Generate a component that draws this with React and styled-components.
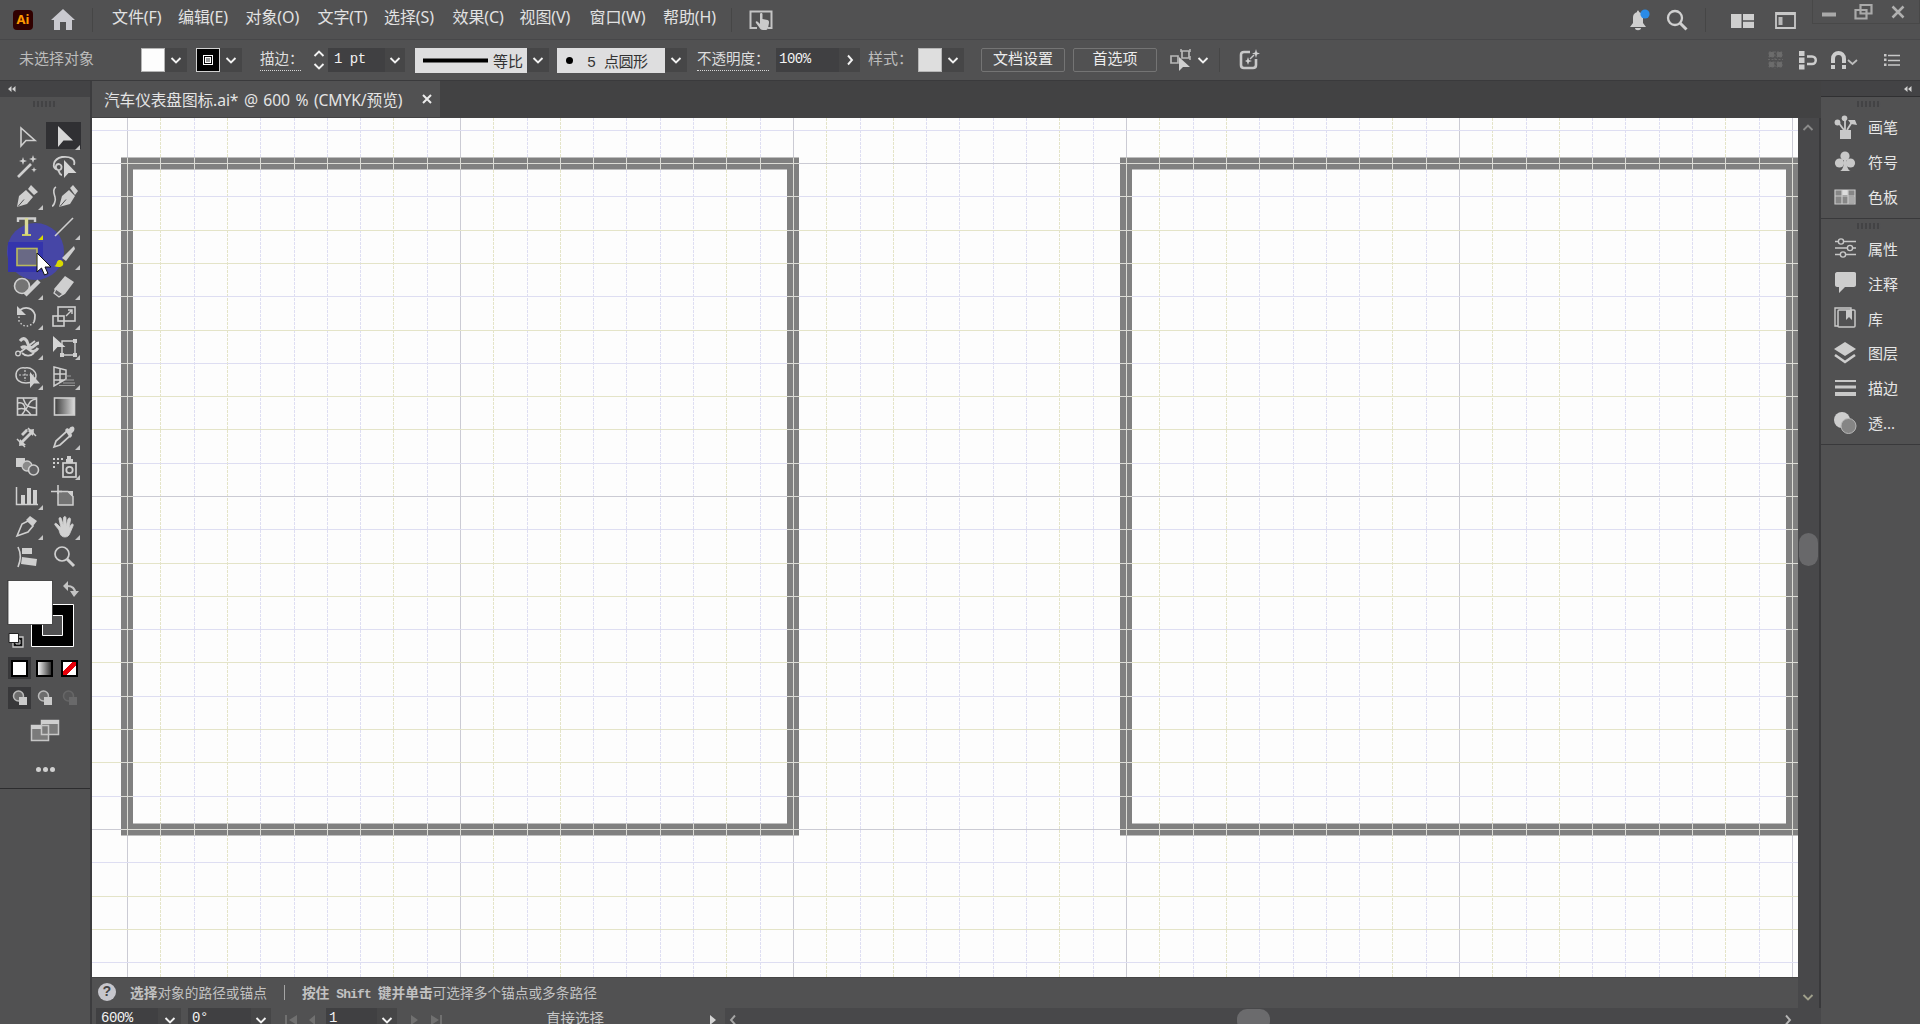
import React from 'react';
import styled, { createGlobalStyle } from 'styled-components';

const SANS = `"Noto Sans", "Noto Sans CJK SC", sans-serif`;
const CJK = `"Liberation Mono", "Noto Sans CJK SC", monospace`;

const menus = [
    ['文件(F)', 66], ['编辑(E)', 67.5], ['对象(O)', 72], ['文字(T)', 66.5], ['选择(S)', 68.5],
    ['效果(C)', 67], ['视图(V)', 70], ['窗口(W)', 73.5], ['帮助(H)', 68],
];

// 37x30 cells, two per row
const tools = [
    { icon: <path d="M13 6v18l5-5.500h9z" fill="none" strokeWidth="1.600" /> },
    { icon: <path d="M13 4v21l5.500-6.500h9.500z" fill="#d6d6d6" stroke="none" />, more: true, active: true },
    { icon: <><path d="M10 25l13-13" strokeWidth="2.600" /><path d="M15 5l1 3 3 1-3 1-1 3-1-3-3-1 3-1zM25 3l1 3 3 1-3 1-1 3-1-3-3-1 3-1zM26 15l.8 2 2 .8-2 .8-.8 2-.8-2-2-.8 2-.8z" fill="#cfcfcf" stroke="none" /></> },
    { icon: <><path d="M13 18c-7-2-5-11 4-13 8-1 14 2 12 8M13 18c4 1 5-5 1-6-4 0-4 5-1 6 2 2 1 5 4 5" fill="none" strokeWidth="1.800" /><path d="M19 8v18l4.500-5h8z" fill="#d6d6d6" stroke="none" /></> },
    { icon: <><path d="M9 25l2-11 7-6 7 7-6 7zM20 7l3-4 7 7-4 3z" fill="#cfcfcf" stroke="none" /><path d="M10 24.500l6-7" stroke="#505052" strokeWidth="1" /></>, more: true },
    { icon: <><path d="M14 25l3-11 7-6 6 6-5 8zM25 6l3-3 5 6-3 4z" fill="#cfcfcf" stroke="none" /><path d="M15 24.500l6-7" stroke="#505052" strokeWidth="1" /><path d="M11 5c-4 2-2 7-1 10s-1 9-3 9" fill="none" strokeWidth="1.600" /></> },
    { icon: <><path d="M10 10V6.500h17V10" fill="none" strokeWidth="2.400" /><path d="M18.500 6v17" strokeWidth="3.400" stroke="#d8d897" /><path d="M14 23h9" strokeWidth="1.800" stroke="#d8d860" /></>, more: true, hot: true },
    { icon: <path d="M10 24L28 6" strokeWidth="1.600" />, more: true },
    { icon: <rect x="9" y="6.500" width="20" height="17" fill="#696985" stroke="#b9b95e" strokeWidth="1.600" />, pressed: true },
    { icon: <><path d="M29 4l-12 12 4 3L30 7z" fill="#cfcfcf" stroke="none" /><path d="M9 24c3 0 2-5 5-6 3 0 5 2 4 5-2 3-6 2-9 1z" fill="#d9d900" stroke="none" /></>, more: true },
    { icon: <><circle cx="14" cy="14" r="7.500" fill="#747474" strokeWidth="1.600" /><path d="M17 23L31 9" strokeWidth="4.500" /></>, more: true },
    { icon: <><path d="M9 17L20 4l9 6-9 12-6 3z" fill="#cfcfcf" stroke="none" /><path d="M11 17l7 5-4 3-5-4z" fill="#626264" stroke="#cfcfcf" strokeWidth="1.300" /></>, more: true },
    { icon: <><path d="M12 8c6-4 13-2 15 5 0 3 0 5-1 7" fill="none" strokeWidth="1.800" /><path d="M26 20c-4 5-11 6-15-1v-6" fill="none" strokeWidth="1.400" strokeDasharray="1.500 2" /><path d="M9 4v9h9z" fill="#cfcfcf" stroke="none" /></>, more: true },
    { icon: <><rect x="13" y="5" width="17" height="14" fill="none" strokeWidth="1.600" /><rect x="8" y="14" width="11" height="10" fill="none" strokeWidth="1.600" /><path d="M21 14l6-6M23 8h4v4" fill="none" strokeWidth="1.400" /></>, more: true },
    { icon: <><path d="M12 9c4-5 7-1 8 3 1 3 3 5 6 2 2-2 3-3 5-3M13 16c4-3 7 0 9 2 3 3 6 1 8-2" fill="none" strokeWidth="3" /><path d="M10 22l17-13M14 21c4 4 9 3 12 0" fill="none" strokeWidth="1.800" /><circle cx="10" cy="21.500" r="2.300" fill="#505052" strokeWidth="1.300" /></>, more: true },
    { icon: <><path d="M17 9h13v14H17z" fill="none" strokeWidth="1.400" /><path d="M28 7h4v4h-4zM28 21h4v4h-4zM15 21h4v4h-4z" fill="#cfcfcf" stroke="none" /><path d="M8 4v16l4.500-5h8z" fill="#d6d6d6" stroke="none" /></>, more: true },
    { icon: <><path d="M8 13c0-5 4-8 9-7 6-1 11 3 11 8s-4 7-10 7c-6 0-10-3-10-8z" fill="none" strokeWidth="1.500" /><path d="M11 13h15M17 8v11" fill="none" strokeWidth="1.200" strokeDasharray="2 1.500" /><path d="M22 10v16l4-4.500h6z" fill="#cfcfcf" stroke="none" /></>, more: true },
    { icon: <><path d="M9 5l12 3v9L9 24zM15 6.500v14M9 12h12M9 18h11" fill="none" strokeWidth="1.500" /><path d="M21 14h5M20 18h9M14 23.500h16M18 21h12" strokeWidth="1.200" stroke="#9c9c9c" /></>, more: true },
    { icon: <><rect x="9.500" y="6" width="19" height="17" fill="none" strokeWidth="1.600" /><path d="M10 11c5-1 7 2 7 6s-3 4-3 6M15 6c2 4 1 9 13 10M28 7c-7 1-7 6-10 10M10 17c5-1 8-1 13 6" fill="none" strokeWidth="1.500" /></> },
    { icon: <rect x="9.500" y="6" width="20" height="17" fill="url(#toolGradient)" strokeWidth="1.600" /> },
    { icon: <><path d="M12 22L25 9" strokeWidth="2.800" /><path d="M9 17l8 8M20 6l8 8" strokeWidth="1.500" /><path d="M11 24l1-7 6 6zM26 7l-7 1 6 6zM15 14l-2-2 5-5 3 1" fill="#cfcfcf" stroke="none" /></> },
    { icon: <><path d="M9 25l2-6L22 9l4 4-11 10z" fill="none" strokeWidth="1.700" /><path d="M20 8l2-2 2 1c2-4 7-3 5 2l-3 3 1 2-2 2z" fill="#cfcfcf" stroke="none" /></>, more: true },
    { icon: <><path d="M8 6h9v9H8z" fill="#cfcfcf" stroke="none" /><circle cx="19" cy="14" r="5" fill="#8a8a8a" strokeWidth="1.300" /><circle cx="25.500" cy="18" r="5" fill="#626264" strokeWidth="1.600" /></> },
    { icon: <><rect x="18" y="11" width="13" height="14" fill="none" strokeWidth="1.700" /><path d="M21 7h7v4h-7zM22 4h4v3h-4z" fill="#cfcfcf" stroke="none" /><circle cx="24.500" cy="18" r="3.200" fill="none" strokeWidth="1.800" /><path d="M8 7h10M8 11h7M8 15h4" strokeWidth="2" strokeDasharray="2 2" /></>, more: true },
    { icon: <><path d="M8.500 5v17.500H30" fill="none" strokeWidth="1.500" /><path d="M13 13h4v9h-4zM19 6h4v16h-4zM25 8h4v14h-4z" fill="#cfcfcf" stroke="none" /></>, more: true },
    { icon: <><path d="M13 9.500h10l5 5V23H13z" fill="#737373" strokeWidth="1.500" /><path d="M13 3v9M6 9.500h11" strokeWidth="1.500" /><path d="M22 9h6v6z" fill="#cfcfcf" stroke="none" /></> },
    { icon: <><path d="M9 24l5-12 6-3 5 5-5 6z" fill="none" strokeWidth="1.600" /><path d="M18 8l4-4 7 5-4 5z" fill="#cfcfcf" stroke="none" /></>, more: true },
    { icon: <path d="M14 18l-4-5c-1-2 1-2 2-1l4 4-2-9c0-2 2-2 2.500 0l2 7V6c0-2 2.500-2 2.500 0v8l2-7c1-2 3-1 2.500 1l-1.500 8 2-3c1-2 3-1 2 1l-3 7c-1 3-3 4-5 4-4 0-5-3-6-7z" fill="#d2d2d2" stroke="#d2d2d2" strokeWidth=".8" />, more: true },
    { icon: <><path d="M10 5c3 6 3 13 0 20" fill="none" strokeWidth="1.600" /><path d="M14 6h10v6H14zM14 15l15 2-1 7-15-2z" fill="#cfcfcf" stroke="none" /></> },
    { icon: <><circle cx="17" cy="12" r="7" fill="none" strokeWidth="1.700" /><path d="M22 17l7 7" strokeWidth="3" /></> },
];

const dockTop = [
    { label: '画笔', icon: <><path d="M6 15h11v9H6z" fill="#c8c8c8" /><path d="M10 15L4 7M11 15V4M13 15l5-8" stroke="#c8c8c8" strokeWidth="1.800" /><circle cx="3.500" cy="7.500" r="2.900" fill="#c8c8c8" /><circle cx="10.500" cy="3.200" r="2.800" fill="#c8c8c8" /><path d="M14 5h7l2 5-6-1z" fill="#c8c8c8" /></> },
    { label: '符号', icon: <><circle cx="11" cy="6" r="4.600" fill="#c8c8c8" /><circle cx="5.500" cy="13" r="4.600" fill="#c8c8c8" /><circle cx="16.500" cy="13" r="4.600" fill="#c8c8c8" /><path d="M10 9h2.500c0 6 1 11 4 12H6c3-1 4-6 4-12z" fill="#c8c8c8" /></> },
    { label: '色板', icon: <><path d="M1 5h20v14H1z" fill="#868686" stroke="#c8c8c8" strokeWidth="1.200" /><path d="M8 5h6v5H8z" fill="#dcdcdc" /><path d="M14 12h6v6h-6z" fill="#a9a9a9" /><path d="M1 11h20M8 5v14M14 5v14" stroke="#c8c8c8" strokeWidth="1.200" /></> },
];

const dockBottom = [
    { label: '属性', icon: <g fill="#505052" stroke="#c8c8c8" strokeWidth="1.400"><path d="M1 5.500h21M1 12h21M1 18.500h21" /><circle cx="7" cy="5.500" r="2.600" /><circle cx="16" cy="12" r="2.600" /><circle cx="9" cy="18.500" r="2.600" /></g> },
    { label: '注释', icon: <path d="M3 1h17c2 0 2 1 2 2v11c0 1-1 2-2 2h-9l-6 6v-6H3c-1 0-2-1-2-2V3c0-1 1-2 2-2z" fill="#cdcdcd" /> },
    { label: '库', icon: <><path d="M4 20H1V2h16v2" fill="none" stroke="#c8c8c8" strokeWidth="1.400" /><rect x="4" y="4" width="17" height="17" rx="1" fill="none" stroke="#c8c8c8" strokeWidth="1.500" /><path d="M12 4h6v10l-3-3-3 3z" fill="#c8c8c8" /></> },
    { label: '图层', icon: <><path d="M11 1l11 7-11 7L0 8z" fill="#cdcdcd" /><path d="M1 14l10 7 10-7" fill="none" stroke="#cdcdcd" strokeWidth="2.600" /></> },
    { label: '描边', icon: <path d="M1 4h21v2H1zM1 9.500h21v3H1zM1 16h21v4H1z" fill="#c8c8c8" /> },
    { label: '透...', icon: <><circle cx="8" cy="9" r="8" fill="#cdcdcd" /><circle cx="14.500" cy="15" r="7.500" fill="#858585" stroke="#b8b8b8" /></> },
];

const COL_TINTS = 'yylyllllyl';
const ROW_TINTS = 'ylyylylyyl';
const tint = { y: '#e4e4c8', l: '#dedef2' };

const gridLines = (count, first, tints) =>
    Array.from({ length: count }, (_, i) => {
        const k = i + first;
        return {
            pos: Math.round(k * 33.3) + 0.5,
            major: k % 10 === 0,
            color: k % 10 === 0 ? '#cbcbd4' : tint[tints[((k % 10) + 10) % 10]],
        };
    });

const cols = gridLines(51, 0, COL_TINTS).map((l) => ({ ...l, pos: l.pos + 35 }));
const rows = gridLines(26, -1, ROW_TINTS).map((l) => ({ ...l, pos: l.pos + 45 }));

const Artboard = ({ x }) => (
    <g>
        <rect x={x + 6} y="45.5" width="666" height="666" fill="none" stroke="#808080" strokeWidth="12" />
        <clipPath id={`frame${x}`}>
            <path clipRule="evenodd" d={`M${x} 39.500h678v678h-678zM${x + 12} 51.500v654h654v-654z`} />
        </clipPath>
        <g clipPath={`url(#frame${x})`} stroke="#dcdcd6">
            {cols.map((l) => <path key={l.pos} d={`M${l.pos} 0v859`} />)}
            {rows.map((l) => <path key={l.pos} d={`M0 ${l.pos}h1706`} />)}
        </g>
    </g>
);

const Canvas = () => (
    <CanvasSvg width="1706" height="859">
        {cols.map((l) => (
            <path key={l.pos} d={`M${l.pos} 0v859`} stroke={l.color} strokeDasharray={l.major ? 'none' : '3 1'} />
        ))}
        {rows.map((l) => (
            <path key={l.pos} d={`M0 ${l.pos}h1706`} stroke={l.color} />
        ))}
        <Artboard x={29} />
        <Artboard x={1028} />
    </CanvasSvg>
);

const Chevron = ({ dir = 'down', color = '#f2f2f2', size = 12 }) => {
    const d = {
        down: 'M1.500 4l4.500 4.500L10.500 4',
        up: 'M1.500 8L6 3.500 10.500 8',
        right: 'M4 1.500L8 6l-4 4.500',
        left: 'M8 1.500L4 6l4 4.500',
    }[dir];
    return (
        <svg width={size} height={size} viewBox="0 0 12 12">
            <path d={d} fill="none" stroke={color} strokeWidth="1.900" />
        </svg>
    );
};

const Collapse = () => (
    <svg width="8" height="6" viewBox="0 0 8 6"><path d="M3.500 0v6L0 3zM7.500 0v6L4 3z" fill="#d0d0d0" /></svg>
);

const MenuBar = () => (
    <TopRow>
        <Spot $at={13}>
            <Logo>Ai</Logo>
        </Spot>
        <Spot $at={18}>
            <svg width="24" height="21" viewBox="0 0 24 21"><path d="M12 0l12 11h-3v10h-6v-8H9v8H3V11H0z" fill="#c9c9cf" /></svg>
        </Spot>
        <Divider $at={17} />
        <Menus>
            {menus.map(([label, w]) => <MenuItem key={label} $w={w}>{label}</MenuItem>)}
        </Menus>
        <Divider $at={0} />
        <Spot $at={17}>
            <svg width="25" height="20" viewBox="0 0 25 20">
                <path d="M8 18H1.500V1.500h21V18H19" fill="none" stroke="#c4c4c4" strokeWidth="2" />
                <path d="M11 4c0-1.500 2.500-1.500 2.500 0v5l5 1c1.500.5 1.500 1 1.500 3l-1 5c-.5 1.500-1 2-3 2h-2c-2 0-3-1-4-3l-3-4c-1-2 1-2 2-1l2 2z" fill="#cacaca" />
            </svg>
        </Spot>
        <Grow />
        <Spot $at={0}>
            <svg width="22" height="22" viewBox="0 0 22 22">
                <path d="M1 18l3-4V9c0-4 2-5 4-6 0-2 2-2 2 0 3 1 4 3 4 6v5l3 4zM6 19h6c0 3-6 3-6 0z" fill="#cfcfcf" />
                <circle cx="16" cy="5" r="4.600" fill="#2a8be6" />
            </svg>
        </Spot>
        <Spot $at={15}>
            <svg width="22" height="22" viewBox="0 0 22 22"><circle cx="9" cy="9" r="7" fill="none" stroke="#d0d0d0" strokeWidth="2.300" /><path d="M14 14l6.500 6.500" stroke="#d0d0d0" strokeWidth="3" /></svg>
        </Spot>
        <Divider $at={17} />
        <Spot $at={25} $down={1}>
            <svg width="23" height="14"><path d="M0 0h10.500v14H0zM12 0h11v6.300H12zM12 7.700h11V14H12z" fill="#cfcfcf" /></svg>
        </Spot>
        <Spot $at={21} $down={1}>
            <svg width="21" height="17"><path d="M1 1h19v15H1z" fill="none" stroke="#c8c8c8" strokeWidth="1.800" /><path d="M1 2.300h19" stroke="#c8c8c8" strokeWidth="1.500" /><path d="M3.500 5h4v8h-4z" fill="#b8b8b8" /></svg>
        </Spot>
        <WindowButtons>
            <svg width="14" height="18"><path d="M0 9.500h14v4H0z" fill="#a9a9a9" /></svg>
            <svg width="19" height="18"><path d="M6.500 2h11v8.500h-11zM1.500 7h11v8.500h-11z" fill="none" stroke="#a9a9a9" strokeWidth="2.200" /></svg>
            <svg width="14" height="18"><path d="M1.500 3.500l11 11M12.500 3.500l-11 11" stroke="#b0b0b0" strokeWidth="2.500" /></svg>
        </WindowButtons>
    </TopRow>
);

const DropButton = ({ $w = 22, dir }) => (
    <Drop $w={$w}><Chevron dir={dir} /></Drop>
);

const ControlBar = () => (
    <ControlRow>
        <Label $w={122} $dim>未选择对象</Label>
        <Swatch />
        <DropButton />
        <StrokeSwatch $at={9}><i /></StrokeSwatch>
        <DropButton />
        <Label $at={18} $w={53}><Dotted $w={41}>描边：</Dotted></Label>
        <Stepper>
            <Chevron dir="up" />
            <Chevron />
        </Stepper>
        <Field $w={57} $pad={6}>1 pt</Field>
        <DropButton $w={20} />
        <LightBox $at={10} $w={112}>
            <svg width="65" height="5"><path d="M0 .5h65v4H0z" /></svg>
            等比
        </LightBox>
        <DropButton />
        <LightBox $at={8} $w={108}>
            <Dot />
            <Brush>5 点圆形</Brush>
        </LightBox>
        <DropButton />
        <Label $at={10} $w={79}><Dotted $w={72}>不透明度：</Dotted></Label>
        <Field $w={63} $pad={3}>100%</Field>
        <DropButton $w={21} dir="right" />
        <Label $at={8} $w={50} $dim>样式：</Label>
        <Swatch $fill="#dedede" />
        <DropButton />
        <PushButton $at={17}>文档设置</PushButton>
        <PushButton $at={8}>首选项</PushButton>
        <Spot $at={13}>
            <svg width="22" height="24" viewBox="0 0 22 24">
                <path d="M1 8h7v7H1zM12 3h7v7h-7z" fill="none" stroke="#b8b8b8" strokeWidth="1.700" />
                <path d="M11 1v3M20 1v3M20 8v4" stroke="#b8b8b8" strokeWidth="1.500" />
                <path d="M9 9v14l4-4h7z" fill="#cfcfcf" />
            </svg>
        </Spot>
        <Spot $at={5}><Chevron /></Spot>
        <Divider $at={10} />
        <Spot $at={19}>
            <svg width="22" height="22" viewBox="0 0 22 22">
                <path d="M11 3H5c-2 0-3 1-3 3v10c0 2 1 3 3 3h9c2 0 3-1 3-3v-6" fill="none" stroke="#c8c8c8" strokeWidth="2.600" />
                <path d="M17 0l1 3.500 3 1-3 1L17 9l-1-3.500-3-1 3-1zM9 8l1 3 3 1-3 1-1 3-1-3-2-1 2-1z" fill="#d0d0d0" />
                <path d="M11 10l4-4" stroke="#c8c8c8" strokeWidth="1.500" />
            </svg>
        </Spot>
        <Grow />
        <svg width="15" height="18" viewBox="0 0 15 18"><path d="M1 1h5v5H1zM9 1h5v5H9zM1 11h5v5H1zM9 11h5v5H9zM7 0v18M0 8.500h15" fill="#6c6c6c" stroke="#686868" strokeDasharray="2 1.500" /></svg>
        <Spot $at={16}>
            <svg width="20" height="19" viewBox="0 0 20 19"><path d="M0 0h5.500v5H0zM0 6.500h5.500v5.500H0zM0 13.500h5.500v5H0z" fill="#cdcdcd" /><path d="M8 5.500h5c5 0 5 7.500 0 7.500H8" fill="none" stroke="#cdcdcd" strokeWidth="2.500" /></svg>
        </Spot>
        <Spot $at={11}>
            <svg width="28" height="19" viewBox="0 0 28 19"><path d="M3 12V8c0-8 11-8 11 0v4" fill="none" stroke="#cdcdcd" strokeWidth="4" /><path d="M1 14h4v4H1zM12 14h4v4h-4z" fill="#cdcdcd" /><path d="M18 9l4.500 4L27 9" fill="none" stroke="#bdbdbd" strokeWidth="1.700" /></svg>
        </Spot>
        <Spot $at={26}>
            <svg width="16" height="13" viewBox="0 0 16 13"><path d="M0 0h2.500v2.500H0zM0 4.500h2.500V7H0zM0 9.500h2.500V12H0z" fill="#c8c8c8" /><path d="M4 1.500h12M4 6.500h12M4 11h12" stroke="#c8c8c8" strokeWidth="1.600" /></svg>
        </Spot>
    </ControlRow>
);

const DrawIcon = () => (
    <svg width="16" height="16"><circle cx="6.500" cy="6" r="5" fill="#6d6d6d" stroke="#b9b9b9" strokeWidth="1.500" /><path d="M7 7h8v8H7z" fill="#cacaca" /></svg>
);

const ToolPanel = () => (
    <Side>
        <PanelHead><Collapse /></PanelHead>
        <ToolBody>
            <Grip />
            <ToolGrid>
                {tools.map((t, i) => (
                    <Tool key={i} $active={t.active} $pressed={t.pressed}>
                        <svg width="37" height="30" stroke="#cfcfcf">
                            {t.icon}
                            {t.more && <path d="M35 23v5h-5z" fill={t.hot ? '#d9d900' : '#c4c4c4'} stroke="none" />}
                        </svg>
                    </Tool>
                ))}
                <ClickMark />
                <Pointer width="16" height="24" viewBox="0 0 16 24">
                    <path d="M1 1v19l4.500-4 3 7 3.500-1.500-3-6.500h6z" fill="#fff" stroke="#111" />
                </Pointer>
            </ToolGrid>
            <svg width="90" height="78">
                <path d="M31.500 32.500h42v42h-42zM42.500 43.500v20h20v-20z" fillRule="evenodd" stroke="#fff" />
                <rect x="8" y="8.500" width="44.500" height="44" fill="#fdfdfd" stroke="#333" strokeWidth=".8" />
                <path d="M67 14c6 0 8 3 8 7" fill="none" stroke="#c4c4c4" strokeWidth="2.200" />
                <path d="M63 14l5-5v10zM70 19h9l-5 6z" fill="#c4c4c4" />
                <path d="M13 65h10v10H13z" fill="#111" stroke="#c9c9c9" strokeWidth="1.300" />
                <path d="M16 68h4v4h-4z" fill="#505052" stroke="#c9c9c9" />
                <path d="M9 61.500h9.500v9H9z" fill="#fff" stroke="#222" />
            </svg>
            <ModeRow $top={7}>
                <Mode $on><ColorChip $bg="#fff" /></Mode>
                <Mode><ColorChip $bg="linear-gradient(90deg, #f2f2f2, #333)" /></Mode>
                <Mode><ColorChip $bg="linear-gradient(135deg, #fff 38%, #e8000a 38%, #e8000a 62%, #fff 62%)" /></Mode>
            </ModeRow>
            <ModeRow $top={8}>
                <Mode $on><DrawIcon /></Mode>
                <Mode><DrawIcon /></Mode>
                <Mode $off><DrawIcon /></Mode>
            </ModeRow>
            <svg width="90" height="58">
                <path d="M31.500 16.500h17v15h-17zM41.500 11.500h17v14h-17z" fill="#7b7b7b" stroke="#c6c6c6" strokeWidth="1.500" />
                <path d="M31 16h10v4H31zM41 11h18v4H41z" fill="#cfcfcf" />
            </svg>
            <More><b /><b /><b /></More>
        </ToolBody>
    </Side>
);

const Dock = () => (
    <DockColumn>
        <PanelHead $right><Collapse /></PanelHead>
        {[dockTop, dockBottom].map((group, i) => (
            <DockGroup key={i}>
                <Grip $dock />
                {group.map((item) => (
                    <DockItem key={item.label}>
                        <svg width="23" height="24" fill="none">{item.icon}</svg>
                        {item.label}
                    </DockItem>
                ))}
            </DockGroup>
        ))}
    </DockColumn>
);

const StatusBar = () => (
    <Status>
        <Field $w={62} $pad={5} $status>600%</Field>
        <DropButton $w={23} />
        <Field $w={63} $pad={4} $at={7} $status>0°</Field>
        <DropButton $w={20} />
        <NavIcons $at={14} $w={30}>
            <svg width="30" height="12"><path d="M0 1h2v10H0zM4 6l8-5v10zM24 6l6-5v10z" fill="#707070" /></svg>
        </NavIcons>
        <Field $w={51} $pad={3} $at={11} $status>1</Field>
        <DropButton $w={20} />
        <NavIcons $at={14} $w={32}>
            <svg width="32" height="12"><path d="M0 1l7 5-7 5zM20 1l8 5-8 5zM29 1h2v10h-2z" fill="#707070" /></svg>
        </NavIcons>
        <StatusText>直接选择</StatusText>
        <svg width="6" height="12"><path d="M0 1l6 5-6 5z" fill="#d4d4d4" /></svg>
        <HScroll>
            <Chevron dir="left" color="#a5a5a5" />
            <Thumb />
            <Chevron dir="right" color="#b5b5b5" />
        </HScroll>
    </Status>
);

const App = () => (
    <>
        <Global />
        <Screen>
            <MenuBar />
            <ControlBar />
            <Workspace>
                <ToolPanel />
                <Document>
                    <Tabs>
                        <Tab>
                            <span>汽车仪表盘图标.ai* @ 600 % (CMYK/预览)</span>
                            <svg width="10" height="10"><path d="M1 1l8 8M9 1L1 9" stroke="#ececec" strokeWidth="2" /></svg>
                        </Tab>
                    </Tabs>
                    <View>
                        <Canvas />
                        <VScroll>
                            <Chevron dir="up" color="#8a8a8a" />
                            <VThumb />
                            <Chevron color="#a0a08c" />
                        </VScroll>
                        <Hint>
                            <Help>?</Help>
                            <b>选择</b>对象的路径或锚点
                            <Bar />
                            <b>按住<Key>Shift</Key>键并单击</b>可选择多个锚点或多条路径
                        </Hint>
                    </View>
                    <StatusBar />
                </Document>
                <Dock />
            </Workspace>
        </Screen>
        <svg width="1" height="1">
            <defs>
                <linearGradient id="toolGradient">
                    <stop offset="0" stopColor="#3a3a3a" />
                    <stop offset="1" stopColor="#dcdcdc" />
                </linearGradient>
            </defs>
        </svg>
    </>
);
export default App;

const Global = createGlobalStyle`
html, body{
    margin:0;
    overflow:hidden;
    background:#515152;
}
*{
    box-sizing:border-box;
}
svg{
    display:block;
    flex:none;
}
`;

const Screen = styled.div`
display:flex;
flex-direction:column;
width:1920px;
height:1024px;
overflow:hidden;
background:#515152;
color:#dedede;
font-family:${SANS};
font-size:15px;
white-space:nowrap;
`;

const TopRow = styled.div`
display:flex;
align-items:center;
height:39px;
flex:none;
`;

const Spot = styled.div`
margin-left:${(p) => p.$at}px;
padding-top:${(p) => (p.$down || 0) * 2}px;
`;

const Grow = styled.div`
flex:1;
`;

const Logo = styled.div`
width:20px;
height:20px;
line-height:19px;
border-radius:4px;
background:#300000;
color:#ff9a00;
font-size:13px;
font-weight:700;
text-align:center;
`;

const Divider = styled.div`
width:1px;
height:24px;
margin-left:${(p) => p.$at}px;
background:#464646;
`;

const Menus = styled.div`
display:flex;
margin-left:19px;
`;

const MenuItem = styled.div`
width:${(p) => p.$w}px;
font-size:16px;
line-height:35px;
letter-spacing:-0.1px;
color:#e2e2e2;
padding-bottom:4px;
`;

const WindowButtons = styled.div`
display:flex;
justify-content:space-between;
width:108px;
height:24px;
margin:0 0 15px 16px;
padding:3px 14px 0 9px;
border:1px solid #484848;
border-top:0;
`;

const ControlRow = styled.div`
display:flex;
align-items:center;
height:42px;
flex:none;
padding:0 20px 0 19px;
border-top:1px solid #474749;
border-bottom:1px solid #3a3a3c;
font-family:${CJK};
`;

const Label = styled.div`
width:${(p) => p.$w}px;
margin-left:${(p) => p.$at || 0}px;
padding-top:2px;
flex:none;
color:${(p) => (p.$dim ? '#bcbcbc' : '#dedede')};
font-size:15px;
line-height:20px;
`;

const Dotted = styled.div`
width:${(p) => p.$w}px;
height:20px;
line-height:19px;
border-bottom:1px dotted #d6d6d6;
font-size:14.500px;
`;

const Swatch = styled.div`
width:24px;
height:24px;
flex:none;
background:${(p) => p.$fill || '#fdfdfd'};
border:1px solid #b5b5b5;
`;

const StrokeSwatch = styled.div`
display:flex;
align-items:center;
justify-content:center;
width:24px;
height:24px;
margin-left:${(p) => p.$at}px;
flex:none;
background:#000;
border:1px solid #d0d0d0;
i{
    width:10px;
    height:10px;
    border:1px solid #fff;
    background:#fff;
    box-shadow:inset 0 0 0 1px #000, inset 0 0 0 2px #fff, inset 0 0 0 5px #999;
}
`;

const Drop = styled.div`
display:flex;
align-items:center;
justify-content:center;
width:${(p) => p.$w}px;
height:24px;
flex:none;
background:#464647;
`;

const Stepper = styled.div`
display:flex;
flex-direction:column;
width:15px;
`;

const Field = styled.div`
width:${(p) => p.$w}px;
height:24px;
margin-left:${(p) => p.$at || 0}px;
padding-left:${(p) => p.$pad || 7}px;
flex:none;
background:#404042;
color:#f2f2f2;
font-size:14px;
line-height:${(p) => (p.$status ? 21 : 23)}px;
letter-spacing:-0.5px;
`;

const LightBox = styled.div`
display:flex;
align-items:center;
justify-content:space-between;
width:${(p) => p.$w}px;
height:25px;
margin-left:${(p) => p.$at}px;
padding:1px 4px 0 8px;
flex:none;
background:#dededf;
color:#333;
font-size:15px;
`;

const Dot = styled.div`
width:7px;
height:7px;
margin-left:1px;
border-radius:50%;
background:#000;
`;

const Brush = styled.div`
width:74px;
font-size:15px;
letter-spacing:-0.5px;
`;

const PushButton = styled.div`
width:84px;
height:24px;
margin-left:${(p) => p.$at}px;
padding-top:1px;
flex:none;
border:1px solid #747474;
border-radius:2px;
color:#ececec;
font-size:15px;
line-height:21px;
text-align:center;
`;

const Workspace = styled.div`
display:flex;
height:943px;
`;

const Side = styled.div`
width:92px;
flex:none;
border-right:2px solid #3c3c3e;
`;

const PanelHead = styled.div`
display:flex;
justify-content:${(p) => (p.$right ? 'flex-end' : 'flex-start')};
height:16px;
padding:5px 8px;
background:#434345;
border-bottom:${(p) => (p.$right ? '1px solid #303032' : '0')};
`;

const ToolBody = styled.div`
height:692px;
padding-top:4px;
border-bottom:1px solid #2c2c2e;
`;

const Grip = styled.div`
width:24px;
height:6px;
margin:${(p) => (p.$dock ? '0 0 4px 36px' : '0 0 15px 33px')};
background:repeating-linear-gradient(90deg, #3d3d3f 0 2px, #505052 2px 4px);
opacity:.7;
`;

const ToolGrid = styled.div`
position:relative;
display:grid;
grid-template-columns:37px 37px;
grid-auto-rows:30px;
margin-left:8px;
`;

const Tool = styled.div`
svg{
    position:relative;
    z-index:${(p) => (p.$active ? 0 : 2)};
}
background:${(p) => (p.$active ? 'linear-gradient(#303033, #303033) 1px 0 / 35px 27px no-repeat' : p.$pressed ? '#3434ac' : 'none')};
${(p) => p.$pressed && 'position:relative; z-index:2; width:35px;'}
`;

const ClickMark = styled.div`
position:absolute;
left:-1px;
top:101px;
width:57px;
height:57px;
border-radius:50%;
background:rgba(66, 66, 190, .78);
z-index:1;
`;

const Pointer = styled.svg`
position:absolute;
left:28px;
top:130px;
z-index:3;
`;

const ModeRow = styled.div`
display:flex;
gap:2px;
margin:${(p) => p.$top}px 0 0 8px;
`;

const Mode = styled.div`
display:flex;
align-items:center;
justify-content:center;
width:23px;
height:22px;
background:${(p) => (p.$on ? '#38383a' : 'none')};
opacity:${(p) => (p.$off ? 0.2 : 1)};
`;

const ColorChip = styled.div`
width:17px;
height:17px;
border:2px solid #000;
background:${(p) => p.$bg};
`;

const More = styled.div`
display:flex;
gap:2px;
margin-left:36px;
b{
    width:5px;
    height:5px;
    border-radius:50%;
    background:#d0d0d0;
}
`;

const Document = styled.div`
display:flex;
flex-direction:column;
width:1729px;
flex:none;
`;

const Tabs = styled.div`
height:37px;
flex:none;
background:#424243;
`;

const Tab = styled.div`
display:flex;
align-items:center;
justify-content:space-between;
width:348px;
height:36px;
padding:0 8px 0 12px;
background:#515152;
color:#e4e4e4;
font-size:15.700px;
letter-spacing:-0.1px;
word-spacing:1.500px;
`;

const View = styled.div`
display:grid;
grid-template-columns:1706px 23px;
grid-template-rows:859px 31px;
`;

const CanvasSvg = styled.svg`
background:#fdfdfd;
`;

const VScroll = styled.div`
grid-row:1 / 3;
grid-column:2;
display:flex;
flex-direction:column;
align-items:center;
justify-content:space-between;
padding:4px 1px 5px 0;
background:#48484a;
border-right:2px solid #39393b;
`;

const VThumb = styled.div`
width:19px;
height:33px;
border-radius:10px;
background:#68686a;
margin-top:-27px;
`;

const Hint = styled.div`
grid-row:2;
grid-column:1;
display:flex;
align-items:center;
padding:0 0 2px 6px;
border-top:1px solid #454545;
color:#c2c2c2;
font-family:${CJK};
font-size:13.700px;
b{
    font-weight:700;
}
`;

const Key = styled.span`
margin:0 7px;
font-size:13px;
letter-spacing:-0.9px;
`;

const Help = styled.div`
width:18px;
height:18px;
margin-right:14px;
border-radius:50%;
background:#c6c6cc;
color:#444;
font-weight:700;
font-size:14px;
line-height:18px;
text-align:center;
`;

const Bar = styled.div`
width:1px;
height:15px;
margin:0 17px;
background:#a5a5a5;
`;

const Status = styled.div`
display:flex;
align-items:center;
height:24px;
flex:none;
padding-left:4px;
font-family:${CJK};
`;

const NavIcons = styled.div`
width:${(p) => p.$w}px;
margin-left:${(p) => p.$at}px;
`;

const StatusText = styled.div`
width:164px;
margin-left:103px;
color:#c6c6c6;
font-size:14.500px;
line-height:20px;
`;

const HScroll = styled.div`
display:flex;
align-items:center;
justify-content:space-between;
flex:1;
height:24px;
margin-left:9px;
padding:0 27px 0 2px;
background:#48484a;
`;

const Thumb = styled.div`
width:33px;
height:22px;
margin-right:14px;
border-radius:10px;
background:#6b6b6d;
`;

const DockColumn = styled.div`
width:99px;
flex:none;
`;

const DockGroup = styled.div`
padding:4px 0 2px;
border-bottom:1px solid #39393b;
`;

const DockItem = styled.div`
display:flex;
align-items:center;
gap:11px;
height:34.850px;
padding:0 0 3px 13px;
color:#e6e6e6;
font-size:15px;
`;
